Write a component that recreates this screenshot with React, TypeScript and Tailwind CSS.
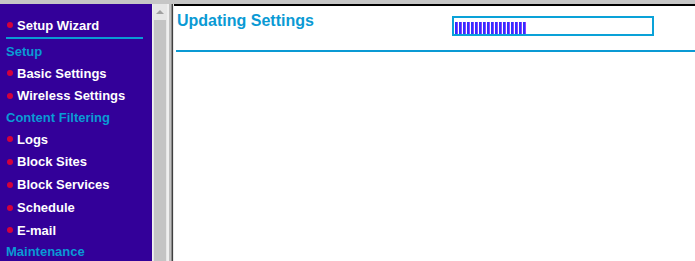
import { FunctionComponent } from "react";

type Row = { label: string; kind: "item" | "head"; h: string };

const rows: Row[] = [
  { label: "Setup", kind: "head", h: "h-[22px]" },
  { label: "Basic Settings", kind: "item", h: "h-[22px]" },
  { label: "Wireless Settings", kind: "item", h: "h-[23px]" },
  { label: "Content Filtering", kind: "head", h: "h-[21px]" },
  { label: "Logs", kind: "item", h: "h-[22px]" },
  { label: "Block Sites", kind: "item", h: "h-[23px]" },
  { label: "Block Services", kind: "item", h: "h-[23px]" },
  { label: "Schedule", kind: "item", h: "h-[23px]" },
  { label: "E-mail", kind: "item", h: "h-[22px]" },
  { label: "Maintenance", kind: "head", h: "h-[21px]" },
];

const Item: FunctionComponent<{ label: string; h: string }> = ({ label, h }) => (
  <div className={`${h} flex items-center shrink-0`}>
    <span className="w-[6px] h-[6px] rounded-full bg-[#d4003c] ml-[1px] mr-[4px] shrink-0" />
    <span className="text-white font-bold text-[13px] leading-none whitespace-nowrap">{label}</span>
  </div>
);

const Head: FunctionComponent<{ label: string; h: string }> = ({ label, h }) => (
  <div className={`${h} flex items-center shrink-0`}>
    <span className="text-[#0a9ad4] font-bold text-[13px] leading-none whitespace-nowrap">{label}</span>
  </div>
);

const App: FunctionComponent = () => {
  return (
    <div className="w-[695px] h-[261px] overflow-hidden bg-white flex flex-col font-['Liberation_Sans',Arial,sans-serif]">
      <div className="h-[4px] shrink-0 bg-[#c6c6c6]" />
      <div className="flex-1 flex flex-row min-h-0">
        {/* sidebar */}
        <div className="w-[152px] shrink-0 bg-[#330099] flex flex-col pl-[6px] pt-[10px] overflow-hidden">
          <Item label="Setup Wizard" h="h-[22px]" />
          <div className="h-[2px] w-[137px] bg-[#0a9ad4] mt-[1px] mb-[1px] shrink-0" />
          {rows.map((r) =>
            r.kind === "item" ? (
              <Item key={r.label} label={r.label} h={r.h} />
            ) : (
              <Head key={r.label} label={r.label} h={r.h} />
            )
          )}
        </div>
        {/* scrollbar */}
        <div className="w-[15px] shrink-0 border-l border-[#f0f0f0] bg-[#e6e6e6] flex flex-col">
          <div className="h-[16px] shrink-0 flex items-center justify-center">
            <div className="w-0 h-0 border-l-[4px] border-r-[4px] border-b-[4px] border-l-transparent border-r-transparent border-b-[#a0a0a0]" />
          </div>
          <div className="flex-1 mx-[1px] bg-[#c4c4c4]" />
        </div>
        {/* frame edge */}
        <div className="w-[7px] shrink-0 flex flex-row">
          <div className="w-[2px] bg-[#efefef]" />
          <div className="w-[2px] bg-[#c0c0c0]" />
          <div className="w-[1px] bg-[#8a8a8a]" />
          <div className="w-[1px] bg-[#404040]" />
          <div className="w-[1px] bg-[#e8e8e8]" />
        </div>
        {/* main */}
        <div className="flex-1 flex flex-col border-t-2 border-black min-w-0">
          <div className="flex flex-row items-start h-[44px] shrink-0">
            <div className="pl-[3px] pt-[5px] w-[278px] shrink-0 text-[#0a9ad4] font-bold text-[16px] leading-[20px] whitespace-nowrap">
              Updating Settings
            </div>
            <div className="mt-[10px] w-[202px] h-[20px] border-2 border-[#0aa2d8] flex items-end px-[1px]">
              <div className="w-[72px] h-[12px] bg-[repeating-linear-gradient(90deg,#3030ff_0px,#3030ff_2px,#9040ff_2px,#9040ff_3px,#ffffff_3px,#ffffff_4px)]" />
            </div>
          </div>
          <div className="h-[2px] ml-[2px] bg-[#0a9ad4] shrink-0" />
        </div>
      </div>
    </div>
  );
};

export default App;
